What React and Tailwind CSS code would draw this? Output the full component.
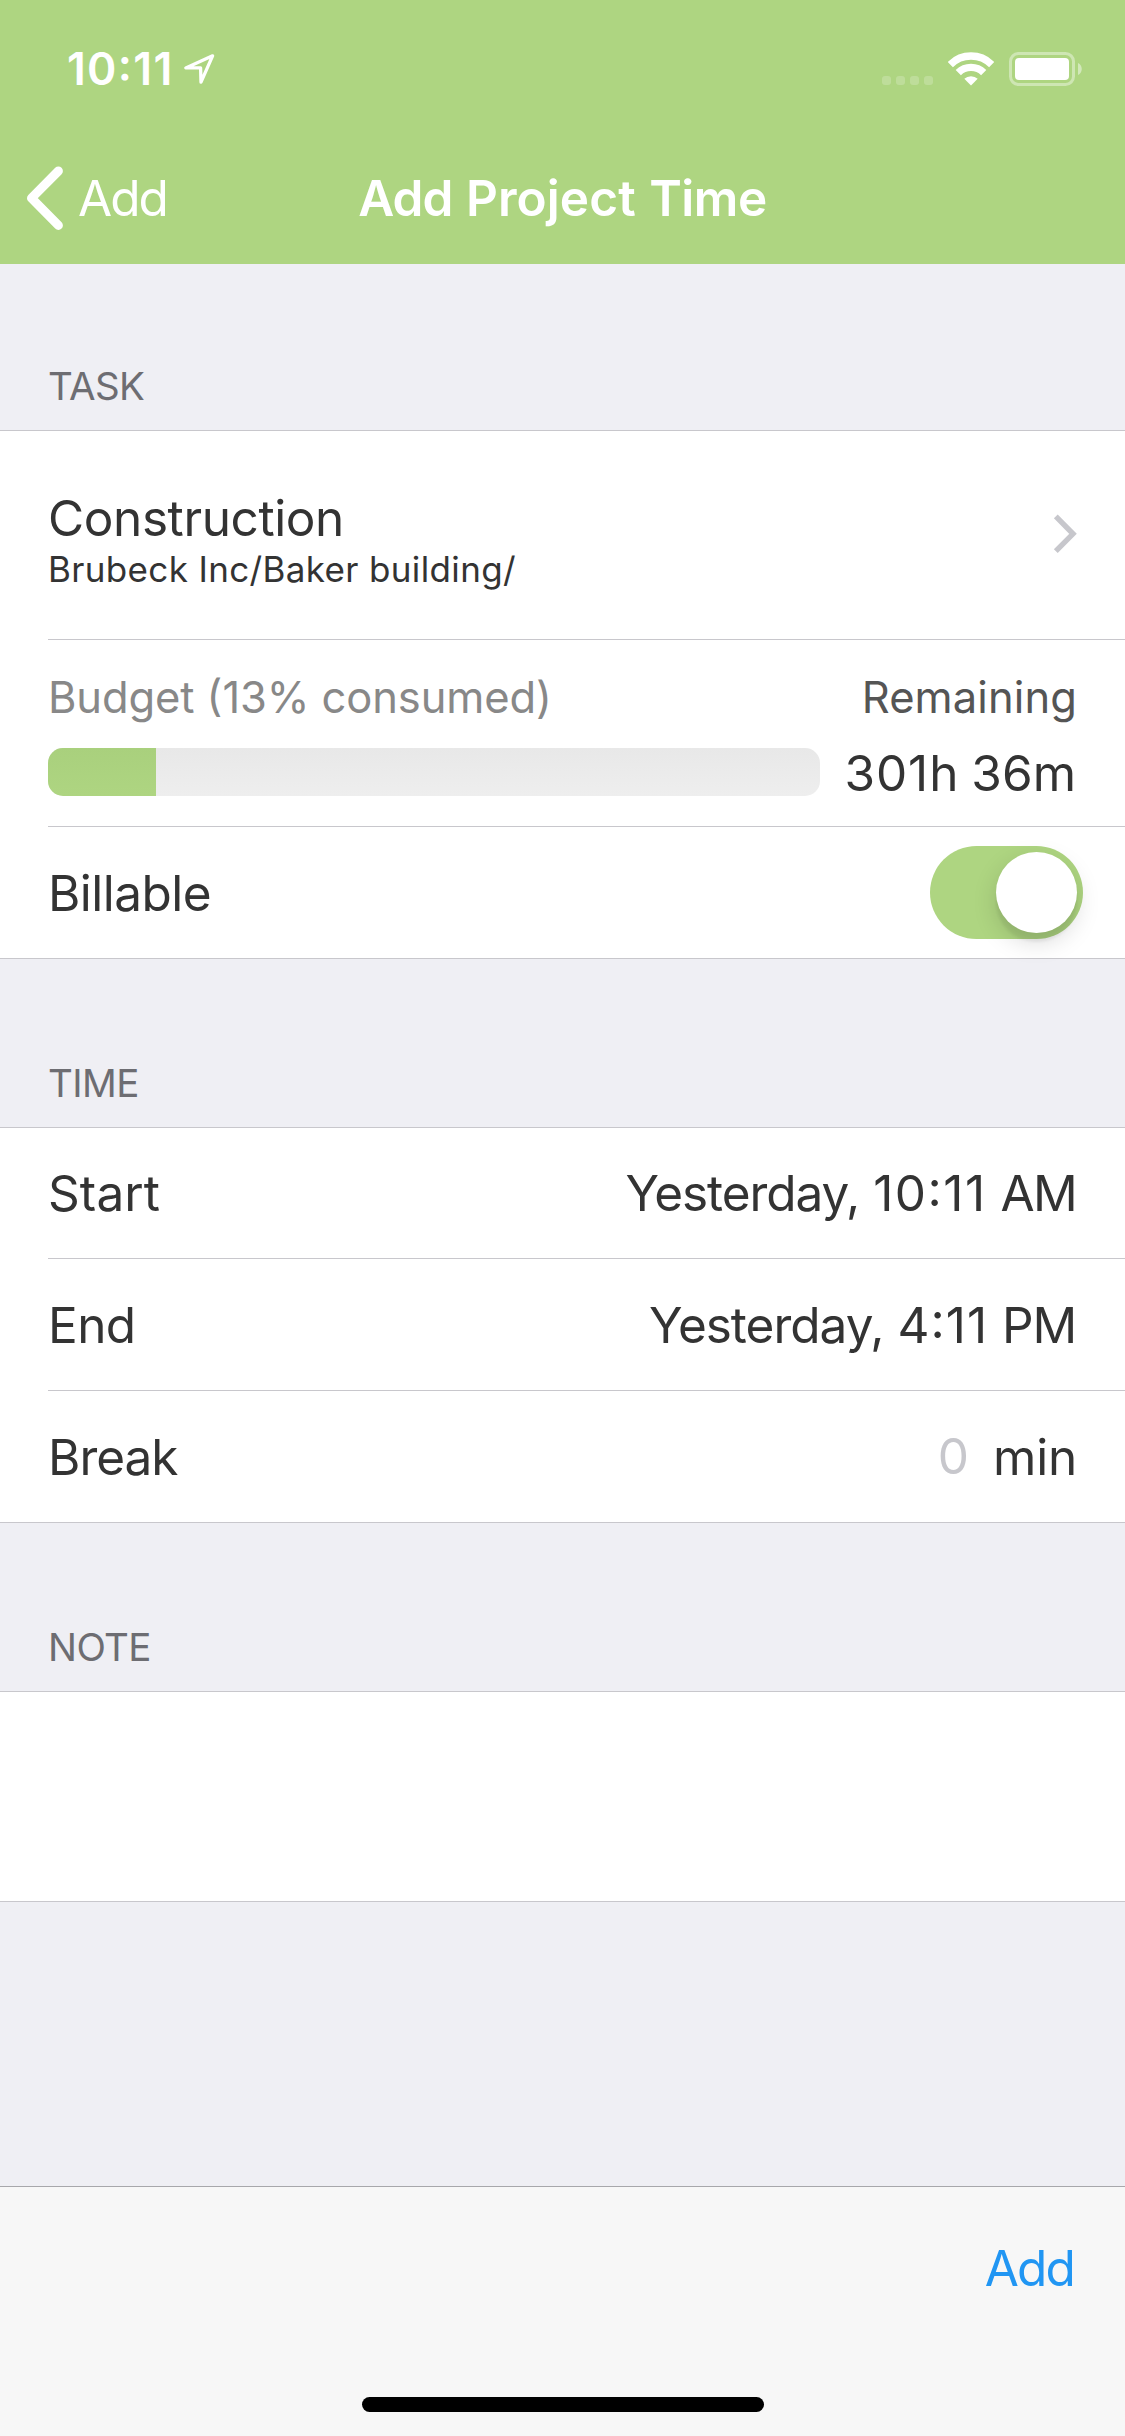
import React from "react";

function StatusBar() {
  return (
    <div className="flex h-[132px] items-center justify-between pt-[6px] pr-[43px] pl-[67px] text-white">
      <div className="flex items-center">
        <span className="text-[44.5px] leading-none font-semibold tracking-[1.3px]">10:11</span>
        <svg className="ml-[9px] h-[32px] w-[32px]" viewBox="0 0 32 32" fill="none" stroke="currentColor" strokeWidth="3.3" strokeLinejoin="round">
          <path d="M29.6 2.8L2.8 14.9L17.6 14.9L18 29.2Z" />
        </svg>
      </div>
      <div className="flex items-center">
        <div className="mt-[23px] mr-[15px] flex gap-[5px]">
          {[0, 1, 2, 3].map((i) => (
            <span key={i} className="h-[9px] w-[9px] rounded-[3px] bg-white/20" />
          ))}
        </div>
        <svg className="mr-[14px] h-[34px] w-[46px]" viewBox="0 0 46 34" fill="none" stroke="currentColor" strokeWidth="7.4">
          <path d="M2.3 12.6A29.3 29.3 0 0 1 43.7 12.6" />
          <path d="M10.3 20.6A18 18 0 0 1 35.7 20.6" />
          <path d="M23 33.6L16.3 26.8A9.8 9.8 0 0 1 29.7 26.8Z" fill="currentColor" stroke="none" />
        </svg>
        <svg className="h-[34px] w-[74px]" viewBox="0 0 74 34" fill="currentColor">
          <rect x="2.5" y="1.5" width="63" height="31" rx="8" fill="none" stroke="currentColor" strokeOpacity="0.4" strokeWidth="3" />
          <rect x="7" y="6" width="54" height="22" rx="4" />
          <path d="M70 11C75 13 75 21 70 23Z" fillOpacity="0.45" />
        </svg>
      </div>
    </div>
  );
}

function NavBar() {
  return (
    <div className="grid h-[132px] grid-cols-[1fr_auto_1fr] items-center text-[49.5px] leading-[60px] text-white">
      <div className="flex items-center pl-[26px]">
        <svg className="h-[64px] w-[38px]" viewBox="0 0 38 64" fill="none" stroke="currentColor" strokeWidth="9" strokeLinecap="round" strokeLinejoin="round">
          <path d="M32.4 5L5.5 32.2L32.4 59.4" />
        </svg>
        <span className="ml-[14px] tracking-[-2px]">Add</span>
      </div>
      <h1 className="font-semibold tracking-[0.1px] [word-spacing:0.8px]">
        <span className="tracking-[-0.9px]">Add</span> Project <span className="tracking-[-0.45px]">Time</span>
      </h1>
    </div>
  );
}

function SectionHeader({ children, first }) {
  return (
    <div className={`flex items-end pl-12 ${first ? "h-[166px]" : "h-[168px]"}`}>
      <h2 className="text-[38.5px] leading-[88px] tracking-[-0.6px] text-[#6d6d72]">{children}</h2>
    </div>
  );
}

function Group({ children }) {
  return <div className="border-y border-[#c8c7cc] bg-white">{children}</div>;
}

function Divider() {
  return <div className="ml-12 h-px bg-[#c8c7cc]" />;
}

export default function App() {
  return (
    <div className="flex h-[2436px] w-[1125px] flex-col overflow-hidden bg-[#efeff4] font-['Inter',sans-serif] text-[49.5px] leading-[60px] text-[#333333] [font-feature-settings:'calt']">
      <header className="bg-[#aed581]">
        <StatusBar />
        <NavBar />
      </header>

      <main className="flex-1">
        <SectionHeader first>TASK</SectionHeader>
        <Group>
          <div className="flex h-[208px] items-center justify-between pr-12 pl-12">
            <div className="flex flex-col pt-2">
              <span className="tracking-[-0.4px]">Construction</span>
              <span className="text-[35px] leading-[42px] tracking-[0.35px]">Brubeck Inc/Baker building/</span>
            </div>
            <svg className="mb-[2px] h-[40px] w-[24px]" viewBox="0 0 24 40" fill="none" stroke="#c7c7cc" strokeWidth="5.4">
              <path d="M2.8 2.4L20 19.8L2.8 37.2" />
            </svg>
          </div>
          <Divider />
          <div className="flex h-[186px] flex-col px-12 pt-[31px]">
            <div className="flex justify-between text-[43.5px] leading-[52px]">
              <span className="tracking-[-0.1px] text-[#888888]">Budget (13% consumed)</span>
              <span className="tracking-[0.1px] text-[#555555]">Remaining</span>
            </div>
            <div className="mt-[25px] flex h-[48px] items-center justify-between">
              <div className="h-[48px] w-[772px] overflow-hidden rounded-[15px] bg-linear-to-b from-[#e8e8e8] to-[#eeeeee]">
                <div className="h-full w-[108px] bg-linear-to-b from-[#a9d07d] to-[#aed581]" />
              </div>
              <span className="pt-[1px] pr-px [word-spacing:-2px]">
                <span className="tracking-[0.95px]">301h</span> 36m
              </span>
            </div>
          </div>
          <Divider />
          <div className="flex h-[131px] items-center justify-between pr-[42px] pl-12">
            <span className="tracking-[-0.54px]">Billable</span>
            <div role="switch" aria-checked="true" className="flex h-[93px] w-[153px] items-center justify-end rounded-full bg-[#aed581] pr-[6px]">
              <div className="h-[81px] w-[81px] rounded-full bg-white shadow-[0_9px_24px_rgba(0,0,0,0.15),0_9px_3px_rgba(0,0,0,0.06)]" />
            </div>
          </div>
        </Group>

        <SectionHeader>TIME</SectionHeader>
        <Group>
          <div className="flex h-[130px] items-center justify-between px-12">
            <span className="tracking-[0.1px]">Start</span>
            <span className="pr-px">
              <span className="tracking-[-1.07px]">Yesterday,</span> <span className="tracking-[1.5px]">10:11</span>{" "}
              <span className="tracking-[-1.7px]">AM</span>
            </span>
          </div>
          <Divider />
          <div className="flex h-[131px] items-center justify-between px-12">
            <span className="tracking-[-0.6px]">End</span>
            <span className="pr-px">
              <span className="tracking-[-1px]">Yesterday,</span> <span className="tracking-[1.04px]">4:11</span>{" "}
              <span className="tracking-[-1.2px]">PM</span>
            </span>
          </div>
          <Divider />
          <div className="flex h-[131px] items-center justify-between px-12">
            <span className="tracking-[-1px]">Break</span>
            <div className="flex gap-[24px]">
              <span className="-mt-px text-[#c7c7cc]">0</span>
              <span className="tracking-[-0.2px]">min</span>
            </div>
          </div>
        </Group>

        <SectionHeader>NOTE</SectionHeader>
        <Group>
          <div className="h-[209px]" />
        </Group>
      </main>

      <footer className="flex h-[250px] flex-col items-center justify-between border-t border-[#a7a7ab] bg-[#f7f7f7] pt-[51px] pb-6">
        <button className="self-end pr-[51px] tracking-[-1.8px] text-[#2196f3]">Add</button>
        <div className="h-[15px] w-[402px] rounded-full bg-black" />
      </footer>
    </div>
  );
}
